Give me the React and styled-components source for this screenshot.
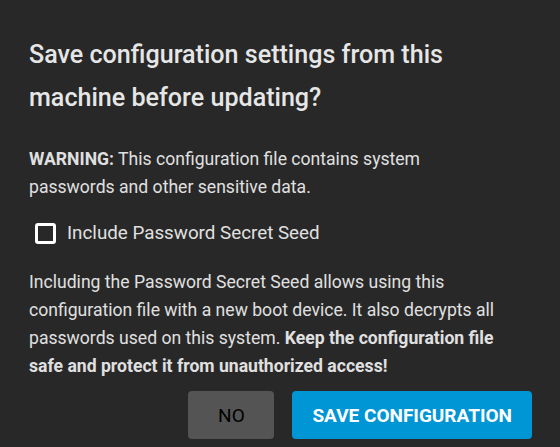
import React, { useState } from "react";
import styled, { createGlobalStyle } from "styled-components";

const GlobalStyle = createGlobalStyle`
  html, body {
    margin: 0;
    padding: 0;
    background: #282828;
  }
  body {
    font-family: Roboto, "Liberation Sans", sans-serif;
  }
`;

const App = () => {
  const [seed, setSeed] = useState(false);

  return (
    <>
      <GlobalStyle />
      <Dialog>
        <Title>Save configuration settings from this machine before updating?</Title>
        <Text>
          <b>WARNING:</b> This configuration file contains system passwords and other sensitive data.
        </Text>
        <CheckRow onClick={() => setSeed(!seed)}>
          <Box $checked={seed} />
          <span>Include Password Secret Seed</span>
        </CheckRow>
        <Text>
          Including the Password Secret Seed allows using this configuration file with a new boot
          device. It also decrypts all passwords used on this system.{" "}
          <b>Keep the configuration file safe and protect it from unauthorized access!</b>
        </Text>
        <Actions>
          <Button>NO</Button>
          <Button $primary>SAVE CONFIGURATION</Button>
        </Actions>
      </Dialog>
    </>
  );
};

export default App;

const Dialog = styled.div`
  width: 560px;
  height: 447px;
  box-sizing: border-box;
  padding: 33px 28px 0 29px;
  background: #282828;
  color: #e0e0e0;
  display: flex;
  flex-direction: column;
`;

const Title = styled.h2`
  margin: 0 0 26px;
  font-size: 25.1px;
  font-weight: 500;
  line-height: 43px;
  color: #e6e6e6;
  width: 460px;
`;

const Text = styled.p`
  margin: 0;
  max-width: 472px;
  font-size: 17.6px;
  line-height: 28px;
  color: #e0e0e0;

  b {
    font-weight: 700;
  }
`;

const CheckRow = styled.label`
  display: flex;
  align-items: center;
  gap: 11px;
  margin: 18px 0 21px 6px;
  font-size: 18.8px;
  line-height: 28px;
  color: #e0e0e0;
  cursor: pointer;
`;

const Box = styled.span`
  width: 21px;
  height: 21px;
  box-sizing: border-box;
  border: 3px solid #ffffff;
  border-radius: 3px;
  background: ${(p) => (p.$checked ? "#ffffff" : "transparent")};
`;

const Actions = styled.div`
  display: flex;
  justify-content: flex-end;
  gap: 18px;
  margin-top: 11px;
`;

const Button = styled.button`
  height: 48px;
  min-width: 86px;
  padding: 0 ${(p) => (p.$primary ? "20px" : "0")};
  border: none;
  border-radius: 4px;
  font-family: Roboto, "Liberation Sans", sans-serif;
  font-size: 19px;
  font-weight: ${(p) => (p.$primary ? 700 : 400)};
  background: ${(p) => (p.$primary ? "#0095d5" : "#545454")};
  color: ${(p) => (p.$primary ? "#ffffff" : "#000000")};
  cursor: pointer;
`;
